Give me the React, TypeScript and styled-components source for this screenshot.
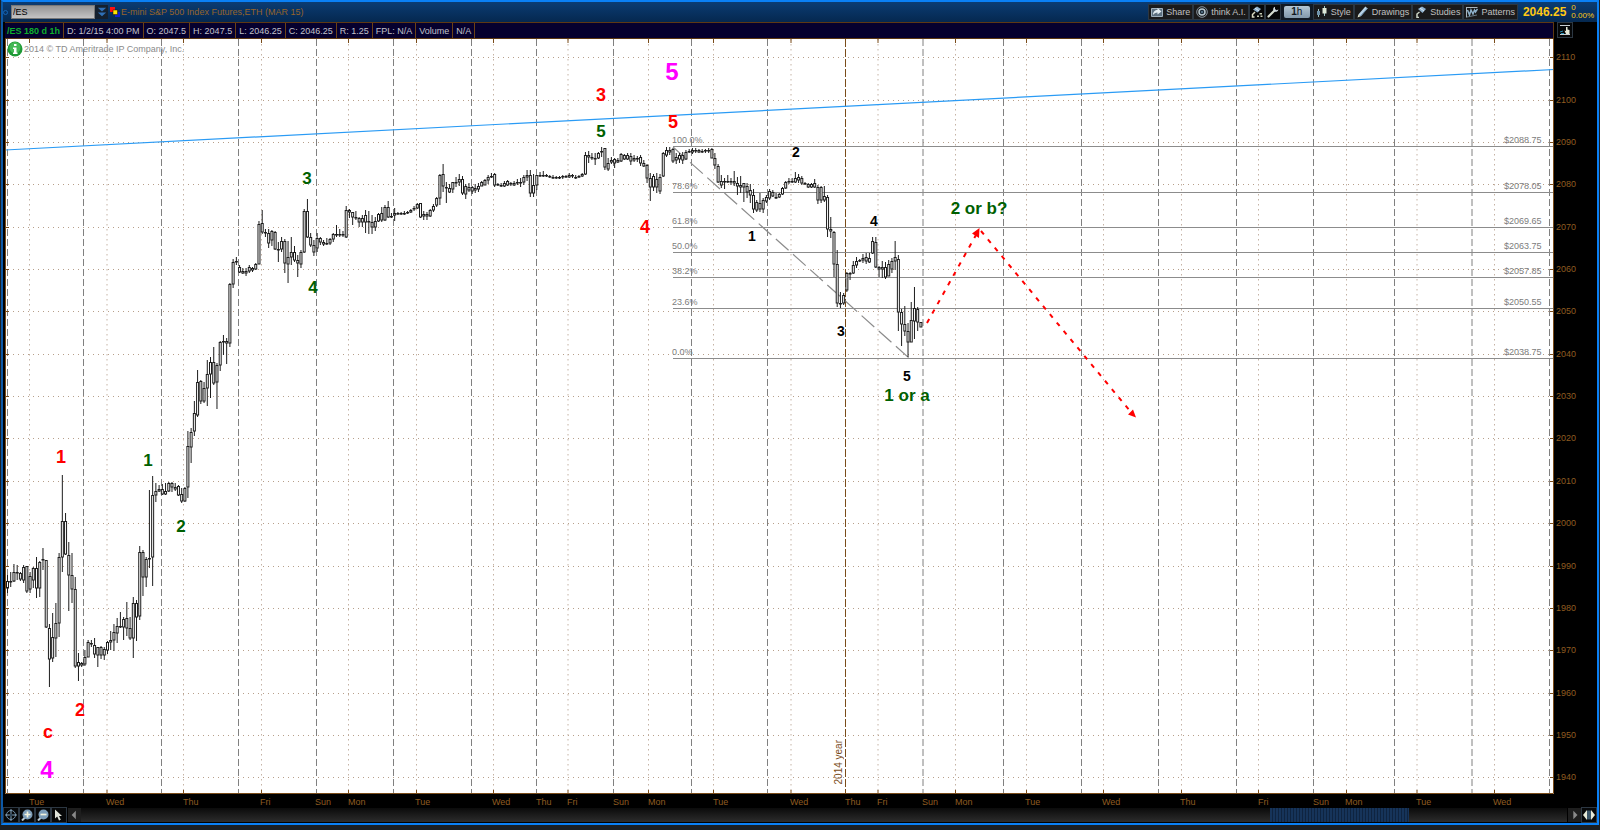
import React from "react";
import styled, { createGlobalStyle } from "styled-components";

const GlobalStyle = createGlobalStyle`
  * {
    box-sizing: border-box;
  }
  body {
    margin: 0;
    background: #101010;
    font-family: "Liberation Sans", Arial, sans-serif;
    font-size: 9px;
    line-height: 12px;
  }
`;

// chart space
const LEFT = 5;
const TOP = 39;
const WIDTH = 1549;
const HEIGHT = 755;
const RIGHT = LEFT + WIDTH;
const BOTTOM = TOP + HEIGHT;

const px = (x: number) => `${((x - LEFT) / WIDTH) * 100}%`;
const py = (y: number) => `${((y - TOP) / HEIGHT) * 100}%`;
const priceY = (price: number) => 57.3 + (2110 - price) * 4.235;

// [high, body top, body bottom, low]
type Candle = number[];

interface Run {
  from: number;
  to: number;
  candles: Candle[];
}

const runs: Run[] = [
  {
    from: 7.3,
    to: 184.7,
    candles: [
      [575, 581, 588, 593], [572, 581, 582, 587], [564, 572, 581, 582], [565, 572, 573, 580], [572, 573, 579, 581],
      [565, 567, 580, 583], [566, 566, 591, 593], [572, 576, 589, 593], [567, 568, 580, 588], [557, 568, 588, 598],
      [561, 562, 588, 597], [548, 559, 560, 570], [560, 560, 627, 628], [624, 628, 659, 687], [613, 637, 658, 662],
      [603, 623, 638, 657], [553, 557, 623, 637], [475, 521, 557, 572], [513, 521, 554, 555], [542, 555, 575, 611],
      [553, 575, 589, 603], [577, 589, 666, 668], [653, 662, 666, 681], [662, 663, 665, 667], [650, 657, 664, 666],
      [640, 642, 657, 657], [640, 643, 644, 647], [638, 645, 654, 658], [647, 647, 655, 667], [646, 647, 655, 659],
      [647, 649, 655, 660], [641, 642, 650, 654], [631, 640, 642, 650], [624, 632, 640, 651], [618, 626, 633, 643],
      [612, 626, 627, 628], [617, 619, 627, 640], [602, 618, 628, 636], [617, 628, 638, 640], [597, 603, 638, 658],
      [600, 603, 617, 641], [546, 552, 616, 620], [550, 552, 577, 596], [557, 559, 577, 587], [490, 558, 559, 568],
      [476, 495, 557, 586], [483, 491, 495, 502], [485, 489, 491, 492], [484, 489, 494, 495], [483, 491, 494, 495],
      [482, 483, 491, 492], [482, 483, 487, 492], [483, 487, 489, 491], [485, 486, 495, 496], [488, 494, 501, 503],
      [487, 488, 501, 502],
    ],
  },
  {
    from: 187.7,
    to: 472,
    candles: [
      [431, 446, 487, 498], [428, 432, 447, 463], [401, 413, 431, 436], [370, 382, 415, 417], [380, 381, 401, 404],
      [382, 388, 401, 403], [360, 374, 388, 406], [357, 362, 374, 398], [347, 362, 383, 385], [363, 365, 382, 409],
      [341, 342, 365, 371], [335, 341, 342, 355], [338, 341, 343, 364], [283, 284, 343, 347], [259, 262, 284, 288],
      [257, 261, 262, 265], [265, 267, 272, 273], [268, 271, 273, 274], [268, 271, 273, 276], [265, 267, 271, 273],
      [267, 268, 270, 272], [263, 264, 269, 270], [221, 224, 264, 264], [210, 223, 232, 234], [229, 232, 233, 237],
      [229, 233, 243, 248], [230, 231, 240, 246], [231, 232, 249, 250], [242, 249, 250, 262], [237, 241, 249, 252],
      [239, 241, 263, 273], [241, 257, 264, 283], [237, 252, 257, 265], [246, 252, 260, 262], [255, 260, 263, 277],
      [250, 252, 264, 268], [209, 211, 252, 253], [199, 211, 237, 238], [233, 237, 245, 247], [240, 245, 252, 256],
      [233, 238, 248, 252], [237, 238, 242, 245], [240, 242, 244, 246], [238, 243, 244, 245], [238, 239, 243, 245],
      [233, 234, 239, 242], [225, 234, 235, 237], [229, 234, 235, 237], [231, 234, 235, 237], [206, 210, 237, 238],
      [209, 210, 212, 218], [212, 212, 217, 225], [211, 217, 218, 220], [217, 218, 222, 227], [215, 218, 222, 227],
      [210, 215, 222, 233], [211, 221, 222, 234], [215, 222, 227, 234], [217, 221, 227, 231], [213, 214, 221, 222],
      [207, 213, 220, 222], [205, 207, 220, 221], [201, 207, 217, 218], [213, 216, 217, 218], [208, 213, 215, 221],
      [212, 213, 214, 215], [212, 213, 214, 215], [211, 213, 214, 215], [211, 212, 213, 214], [209, 210, 212, 213],
      [206, 208, 209, 211], [203, 204, 208, 209], [203, 203, 217, 218], [211, 214, 216, 220], [212, 214, 216, 220],
      [209, 210, 216, 217], [204, 206, 210, 212], [197, 198, 205, 207], [174, 175, 198, 205], [164, 174, 186, 192],
      [182, 187, 188, 203], [184, 188, 192, 193], [182, 182, 189, 193], [177, 182, 183, 187], [174, 179, 182, 186],
      [176, 179, 193, 195], [184, 186, 194, 199], [183, 187, 190, 192], [186, 187, 191, 194],
    ],
  },
  {
    from: 475,
    to: 711.7,
    candles: [
      [184, 188, 190, 193], [183, 186, 189, 192], [181, 182, 186, 186], [179, 180, 185, 185], [175, 177, 180, 184],
      [173, 176, 177, 178], [173, 174, 185, 187], [183, 184, 185, 186], [183, 185, 186, 187], [181, 183, 186, 187],
      [180, 181, 185, 186], [182, 183, 184, 186], [181, 183, 185, 186], [179, 182, 183, 185], [178, 182, 183, 187],
      [175, 177, 182, 185], [170, 175, 177, 181], [170, 175, 193, 197], [174, 185, 193, 197], [175, 175, 185, 190],
      [172, 175, 176, 177], [171, 175, 176, 177], [174, 175, 176, 177], [175, 176, 177, 178], [175, 177, 178, 179],
      [176, 177, 178, 179], [176, 177, 178, 179], [175, 176, 177, 179], [175, 176, 177, 178], [173, 175, 177, 178],
      [174, 175, 176, 178], [175, 177, 178, 179], [175, 176, 177, 178], [173, 174, 176, 177], [152, 155, 174, 175],
      [151, 155, 157, 163], [153, 157, 158, 160], [153, 158, 159, 165], [152, 153, 158, 159], [147, 151, 152, 157],
      [148, 148, 167, 170], [158, 163, 169, 171], [157, 160, 162, 164], [158, 159, 163, 168], [158, 160, 162, 163],
      [153, 154, 161, 162], [154, 155, 159, 160], [153, 155, 159, 160], [153, 156, 161, 165], [155, 158, 160, 162],
      [156, 158, 159, 162], [155, 157, 163, 166], [160, 163, 166, 167], [164, 165, 178, 183], [173, 178, 187, 201],
      [174, 176, 187, 191], [173, 179, 187, 193], [174, 177, 191, 194], [152, 153, 176, 177], [147, 150, 155, 157],
      [147, 150, 152, 155], [148, 149, 161, 163], [153, 157, 160, 164], [153, 155, 159, 163], [152, 155, 160, 164],
      [150, 152, 159, 160], [149, 151, 152, 153], [148, 150, 152, 154], [148, 150, 151, 153], [149, 150, 152, 153],
      [149, 151, 152, 153], [149, 150, 151, 153], [148, 150, 151, 153], [148, 149, 158, 158],
    ],
  },
  {
    from: 714.7,
    to: 920.7,
    candles: [
      [153, 158, 165, 169], [164, 166, 182, 183], [175, 181, 185, 188], [178, 181, 182, 189], [175, 181, 182, 183],
      [178, 181, 182, 185], [171, 181, 183, 186], [177, 183, 186, 195], [176, 185, 187, 193], [183, 183, 187, 202],
      [183, 186, 192, 198], [184, 190, 195, 203], [189, 195, 209, 213], [200, 202, 210, 212], [193, 203, 209, 212],
      [198, 200, 209, 213], [195, 197, 201, 203], [189, 191, 198, 200], [190, 192, 196, 197], [193, 197, 198, 199],
      [193, 194, 197, 198], [187, 188, 194, 195], [181, 182, 188, 189], [178, 181, 182, 184], [178, 181, 182, 183],
      [172, 178, 182, 183], [174, 177, 180, 183], [176, 178, 183, 185], [182, 183, 184, 185], [183, 184, 187, 188],
      [183, 184, 187, 188], [179, 183, 187, 188], [185, 187, 200, 204], [186, 187, 200, 203], [186, 196, 200, 202],
      [195, 197, 229, 237], [217, 229, 231, 238], [231, 232, 264, 277], [250, 264, 303, 307], [292, 303, 304, 308],
      [293, 295, 303, 305], [272, 273, 290, 292], [272, 273, 274, 280], [261, 265, 273, 274], [257, 261, 265, 268],
      [259, 260, 261, 262], [254, 258, 260, 263], [253, 257, 261, 264], [253, 258, 262, 263], [237, 241, 253, 254],
      [237, 242, 267, 268], [266, 267, 269, 277], [261, 267, 269, 278], [262, 267, 277, 279], [260, 264, 276, 276],
      [258, 261, 269, 273], [241, 257, 261, 270], [255, 259, 312, 331], [309, 312, 324, 346], [306, 324, 331, 336],
      [323, 331, 342, 357], [302, 320, 342, 342], [287, 308, 321, 339], [307, 309, 322, 331], [322, 322, 327, 327],
    ],
  },
];

const sessions = [
  7.5, 83.5, 161.5, 238.5, 316.5, 393.5, 471.5, 536.5, 613.5, 691.5, 767.5, 923, 1003.5, 1081.5, 1158.5, 1236.5,
  1313.5, 1394.5, 1472, 1549.5,
];

const noons = [
  29.5, 107, 183.5, 261.5, 348.5, 416.5, 493.5, 568, 648.5, 713.5, 791, 878, 955.5, 1026.5, 1103.5, 1181.5, 1258.5,
  1346.5, 1417, 1494.5,
];

const days = [
  { x: 29, name: "Tue" }, { x: 106, name: "Wed" }, { x: 183, name: "Thu" }, { x: 260, name: "Fri" },
  { x: 315, name: "Sun" }, { x: 348, name: "Mon" }, { x: 415, name: "Tue" }, { x: 492, name: "Wed" },
  { x: 536, name: "Thu" }, { x: 567, name: "Fri" }, { x: 613, name: "Sun" }, { x: 648, name: "Mon" },
  { x: 713, name: "Tue" }, { x: 790, name: "Wed" }, { x: 845, name: "Thu" }, { x: 877, name: "Fri" },
  { x: 922, name: "Sun" }, { x: 955, name: "Mon" }, { x: 1025, name: "Tue" }, { x: 1102, name: "Wed" },
  { x: 1180, name: "Thu" }, { x: 1258, name: "Fri" }, { x: 1313, name: "Sun" }, { x: 1345, name: "Mon" },
  { x: 1416, name: "Tue" }, { x: 1493, name: "Wed" },
];

const prices = Array.from({ length: 18 }, (_, i) => 2110 - i * 10);

const levels = [
  { pct: "100.0%", price: 2088.75 },
  { pct: "78.6%", price: 2078.05 },
  { pct: "61.8%", price: 2069.65 },
  { pct: "50.0%", price: 2063.75 },
  { pct: "38.2%", price: 2057.85 },
  { pct: "23.6%", price: 2050.55 },
  { pct: "0.0%", price: 2038.75 },
];

const levelY = (price: number) => Math.floor(priceY(price) - 0.5);

const RED = "#ff0000";
const GREEN = "#006000";
const PINK = "#ff00ff";
const BLACK = "#000000";

const notes = [
  { x: 672, y: 72, text: "5", color: PINK, size: 24 },
  { x: 47, y: 770, text: "4", color: PINK, size: 24 },
  { x: 61, y: 457, text: "1", color: RED, size: 18 },
  { x: 80, y: 710, text: "2", color: RED, size: 18 },
  { x: 48, y: 732, text: "c", color: RED, size: 18 },
  { x: 601, y: 95, text: "3", color: RED, size: 18 },
  { x: 645, y: 227, text: "4", color: RED, size: 18 },
  { x: 673, y: 122, text: "5", color: RED, size: 18 },
  { x: 148, y: 460, text: "1", color: GREEN, size: 17 },
  { x: 181, y: 526, text: "2", color: GREEN, size: 17 },
  { x: 307, y: 178, text: "3", color: GREEN, size: 17 },
  { x: 313, y: 287, text: "4", color: GREEN, size: 17 },
  { x: 601, y: 131, text: "5", color: GREEN, size: 17 },
  { x: 907, y: 395, text: "1 or a", color: GREEN, size: 17 },
  { x: 979, y: 208, text: "2 or b?", color: GREEN, size: 17 },
  { x: 752, y: 236, text: "1", color: BLACK, size: 14 },
  { x: 796, y: 152, text: "2", color: BLACK, size: 14 },
  { x: 841, y: 331, text: "3", color: BLACK, size: 14 },
  { x: 874, y: 221, text: "4", color: BLACK, size: 14 },
  { x: 907, y: 376, text: "5", color: BLACK, size: 14 },
];

const stats = ["D: 1/2/15 4:00 PM", "O: 2047.5", "H: 2047.5", "L: 2046.25", "C: 2046.25", "R: 1.25", "FPL: N/A", "Volume", "N/A"];

const Icon: React.FC<{ size?: number; children: React.ReactNode }> = ({ size = 12, children }) => (
  <svg width={size} height={size} viewBox="0 0 12 12" fill="none" aria-hidden="true">
    {children}
  </svg>
);

const ShareIcon = () => (
  <Icon>
    <path d="M0.5 2.5h11v8h-11z" fill="#5d7080" stroke="#9fb0bd" />
    <path d="M2 9c0-3.500 2-5 4.500-5V2l4 3.500-4 3V6.500C4.500 6.500 3 7.500 2 9z" fill="#e3ecf1" />
  </Icon>
);

const ThinkIcon = () => (
  <Icon>
    <circle cx="6" cy="6" r="5.300" stroke="#8794a0" />
    <circle cx="6" cy="6" r="3" fill="#1c2a36" stroke="#b6c6cf" strokeWidth="1.500" />
    <circle cx="6" cy="6" r="1" fill="#5e7f96" />
  </Icon>
);

const FlaskIcon = () => (
  <Icon>
    <path d="M2 3.500L6 0.500l4 2.500-3.500 3.500z" fill="#8fb0cc" />
    <path d="M4 2l4 3" stroke="#dce8f0" />
    <path d="M4 6L1.500 8.500V11h2" stroke="#d8d8c0" strokeWidth="1.500" />
    <path d="M8.500 7h2.500v1.500H8.500zM6 9.500h2V11H6zM9.500 9.500h2V11h-2z" fill="#c5cbb4" />
  </Icon>
);

const WrenchIcon = () => (
  <Icon>
    <path d="M1.500 10.500L7 5" stroke="#d5dcd0" strokeWidth="2.200" strokeLinecap="round" />
    <path d="M8 0.800C6 1.500 5.500 4 7 5.200s4 0.500 4.400-1.700L9.400 4.200 8 3z" fill="#cfd8dc" />
  </Icon>
);

const StyleIcon = () => (
  <Icon>
    <path d="M2.500 3v8M8.500 0v10" stroke="#9cc3c3" />
    <path d="M1 5h3v4H1z" fill="#6f93ab" />
    <path d="M6.500 2h4v5.500h-4z" fill="#dfe8d6" />
  </Icon>
);

const PencilIcon = () => (
  <Icon>
    <path d="M2.500 9.500L9.500 1.500" stroke="#b9d3e6" strokeWidth="3" />
    <path d="M3.500 10l7-8" stroke="#6f94b2" />
    <path d="M0.500 11.500l1-3 2 1.800z" fill="#e9ead4" />
  </Icon>
);

const StudiesIcon = () => (
  <Icon>
    <path d="M3 3L7 0.500l4 2.500-3.500 4z" fill="#8fb0cc" />
    <path d="M5 2l4 3" stroke="#dce8f0" />
    <path d="M4.500 6L2 8v3.500h2" stroke="#cdd6c8" strokeWidth="1.500" />
  </Icon>
);

const PatternsIcon = () => (
  <Icon>
    <path d="M0.500 1v10.500M0.500 1.500h11" stroke="#a8b4bc" />
    <path d="M1.500 4l2 5 1.500-5 2 4 1.500-4 1 2 2-3" stroke="#8db0c9" strokeWidth="1.500" />
    <path d="M1 11l10-2" stroke="#687a86" />
  </Icon>
);

const tools = [
  { label: "Share", icon: <ShareIcon /> },
  { label: "think A.I.", icon: <ThinkIcon /> },
];

const chartTools = [
  { label: "Style", icon: <StyleIcon /> },
  { label: "Drawings", icon: <PencilIcon /> },
  { label: "Studies", icon: <StudiesIcon /> },
  { label: "Patterns", icon: <PatternsIcon /> },
];

const Candles: React.FC<Run> = ({ from, to, candles }) => {
  const step = (to - from) / (candles.length - 1);
  return (
    <g stroke="#1c1c1c" fill="#ffffff">
      {candles.map(([high, top, bottom, low], i) => {
        const x = from + i * step + 0.2;
        return (
          <g key={i}>
            <path d={`M${x} ${high}V${low}`} />
            <rect x={x - 1} y={top + 0.5} width={2} height={Math.max(bottom - top - 0.5, 0.5)} />
          </g>
        );
      })}
    </g>
  );
};

const Chart = () => (
  <Plot>
    <Drawing viewBox={`${LEFT} ${TOP} ${WIDTH} ${HEIGHT}`} preserveAspectRatio="none">
      <g stroke="#b79f8a" strokeDasharray="1 4">
        {prices.map((p) => (
          <path key={p} d={`M${LEFT + 3} ${Math.round(priceY(p)) + 0.5}H${RIGHT}`} />
        ))}
      </g>
      <g stroke="#c4b2a4" strokeDasharray="1.500 3.500">
        {noons.map((x) => (
          <path key={x} d={`M${x} ${TOP}V${BOTTOM}`} />
        ))}
      </g>
      <g stroke="#808080" strokeDasharray="7 3">
        {sessions.map((x) => (
          <path key={x} d={`M${x} ${TOP}V${BOTTOM}`} />
        ))}
      </g>
      <path d={`M845.500 ${TOP}V${BOTTOM}`} stroke="#7a4c1a" strokeDasharray="8 2" />
      <g stroke="#7a4c1a">
        {noons.map((x) => (
          <path key={x} d={`M${x} ${BOTTOM - 4}V${BOTTOM}M${x} ${TOP}v4`} />
        ))}
        {prices.map((p) => (
          <path key={p} d={`M${LEFT} ${Math.round(priceY(p)) + 0.5}h4M${RIGHT - 4} ${Math.round(priceY(p)) + 0.5}h4`} />
        ))}
      </g>
      <path d="M5 150L1554 69.500" stroke="#2a9bf5" strokeWidth="1.200" />
      <g stroke="#8c8c8c">
        {levels.map((l) => (
          <path key={l.pct} d={`M673 ${levelY(l.price) + 0.5}H${RIGHT}`} />
        ))}
        <path d="M673 147L909 358" strokeDasharray="17 6" strokeWidth="1.200" />
      </g>
      {runs.map((run) => (
        <Candles key={run.from} {...run} />
      ))}
      <g stroke={RED} strokeWidth="2" strokeDasharray="4.500 6.300">
        <path d="M927 323L976 235" />
        <path d="M981 231L1130 411" />
      </g>
      <path d="M979.500 228l-7.500 5.500 7 4.500z M1136 417.500l-8-3 5-5z" fill={RED} />
      <path d={`M${LEFT + 0.5} ${TOP}V${BOTTOM - 0.5}H${RIGHT - 0.5}V${TOP}`} stroke="#7a4c1a" fill="none" />
    </Drawing>
    <Copyright>
      <svg width="16" height="16" viewBox="0 0 16 16" aria-hidden="true">
        <circle cx="8" cy="8" r="7.500" fill="#1f9a36" />
        <circle cx="8" cy="6.500" r="5.500" fill="#45b956" />
        <path d="M7 3h2.500v2H7zM6 6.500h3.500v5h1V13H6v-1.500h1V8H6z" fill="#ffffff" />
      </svg>
      2014 © TD Ameritrade IP Company, Inc.
    </Copyright>
    {levels.map((l) => (
      <React.Fragment key={l.pct}>
        <Level style={{ left: px(672), top: py(levelY(l.price)) }}>{l.pct}</Level>
        <Level style={{ left: px(1504), top: py(levelY(l.price)) }}>${l.price.toFixed(2)}</Level>
      </React.Fragment>
    ))}
    {notes.map((n) => (
      <Note key={`${n.x}-${n.y}`} color={n.color} $size={n.size} style={{ left: px(n.x), top: py(n.y) }}>
        {n.text}
      </Note>
    ))}
    <YearMark style={{ left: px(834), top: py(740) }}>2014 year</YearMark>
  </Plot>
);

const App = () => {
  return (
    <Page>
      <GlobalStyle />
      <Window>
        <Header>
          <LinkDot aria-label="Link" />
          <SymbolBox>
            <SymbolInput aria-label="Symbol" defaultValue="/ES" />
            <SymbolButton aria-label="Open symbol list">
              <Icon size={10}>
                <path d="M1 1h10L6 5.500zM1 6.500h10L6 11z" fill="#2f6fb5" />
              </Icon>
            </SymbolButton>
          </SymbolBox>
          <svg width="12" height="12" viewBox="0 0 12 12" aria-hidden="true">
            <path d="M1 1h5v5H1z" fill="#ff1010" />
            <path d="M6 6h5v5H6z" fill="#1020d0" />
            <path d="M4 4h4.500v4.500H4z" fill="#ffe600" stroke="#201000" strokeWidth="0.500" />
          </svg>
          <Title>E-mini S&amp;P 500 Index Futures,ETH (MAR 15)</Title>
          <Tools>
            {tools.map((t) => (
              <ToolButton key={t.label}>
                {t.icon}
                {t.label}
              </ToolButton>
            ))}
            <IconButton aria-label="Studies setup">
              <FlaskIcon />
            </IconButton>
            <IconButton aria-label="Settings">
              <WrenchIcon />
            </IconButton>
            <Frame>
              <Period>
                <b>1</b>h
              </Period>
            </Frame>
            {chartTools.map((t) => (
              <ToolButton key={t.label}>
                {t.icon}
                {t.label}
              </ToolButton>
            ))}
          </Tools>
          <Quote>
            <Last>2046.25</Last>
            <Change>
              <span>0</span>
              <span>0.00%</span>
            </Change>
          </Quote>
        </Header>
        <Main>
          <StatusBar>
            <Stat $symbol>/ES 180 d 1h</Stat>
            {stats.map((s) => (
              <Stat key={s}>{s}</Stat>
            ))}
          </StatusBar>
          <Corner>
            <IconButton aria-label="Scale">
              <Icon>
                <path d="M1 1.500h10M1 10.500h10" stroke="#c8ced2" />
                <path d="M1 8l3-1M2 9.500h3" stroke="#2a91b5" />
                <path d="M7 3v4L5.500 6.500 7 10h3.500V6L8.500 5.500V3z" fill="#e6ead8" />
              </Icon>
            </IconButton>
          </Corner>
          <Chart />
          <PriceAxis>
            {prices.map((p) => (
              <Price key={p} style={{ top: py(priceY(p)) }}>
                {p}
              </Price>
            ))}
          </PriceAxis>
          <TimeAxis>
            {days.map((d) => (
              <Day key={d.x} style={{ left: px(d.x) }}>
                {d.name}
              </Day>
            ))}
          </TimeAxis>
        </Main>
        <BottomBar>
          <IconButton aria-label="Crosshair">
            <Icon>
              <circle cx="6" cy="6" r="4.500" stroke="#6f8ea8" />
              <path d="M6 0v12M0 6h12" stroke="#87a6bd" />
              <circle cx="6" cy="6" r="1.500" fill="#2d4558" />
            </Icon>
          </IconButton>
          <IconButton aria-label="Zoom in">
            <Icon>
              <path d="M1 11.500l3-3" stroke="#b8c6ce" strokeWidth="2" />
              <circle cx="6.500" cy="5.500" r="5" fill="#7d9db8" />
              <path d="M3.500 5.500h6M6.500 2.500v6" stroke="#f2f2dc" strokeWidth="1.700" />
            </Icon>
          </IconButton>
          <IconButton aria-label="Zoom out">
            <Icon>
              <path d="M1 11.500l3-3" stroke="#b8c6ce" strokeWidth="2" />
              <circle cx="6.500" cy="5.500" r="5" fill="#7d9db8" />
              <path d="M3.500 5.500h6" stroke="#f2f2dc" strokeWidth="1.700" />
            </Icon>
          </IconButton>
          <IconButton aria-label="Pointer">
            <Icon>
              <path d="M2 0.500v9l2.200-2L6 11.500l1.800-0.800L6 7h3z" fill="#dfe3da" />
            </Icon>
          </IconButton>
          <ArrowButton aria-label="Scroll left">
            <Icon size={10}>
              <path d="M7 1v10L2 6z" fill="#8a8a8a" />
            </Icon>
          </ArrowButton>
          <Track>
            <Thumb />
          </Track>
          <ArrowButton aria-label="Scroll right">
            <Icon size={10}>
              <path d="M4 1v10l5-5z" fill="#8a8a8a" />
            </Icon>
          </ArrowButton>
          <IconButton aria-label="Fit width">
            <Icon>
              <path d="M0 6l4-5v10z" fill="#e6ead8" />
              <path d="M12 6L8 1v10z" fill="#e6ead8" />
              <path d="M5 1.500v9M7 1.500v9" stroke="#6fa5c8" />
            </Icon>
          </IconButton>
        </BottomBar>
      </Window>
    </Page>
  );
};

export default App;

const Page = styled.div`
  display: flex;
  height: 100vh;
  min-height: 500px;
  padding: 0 1px 2px;
  background: #1c1f22;
`;

const Window = styled.div`
  display: flex;
  flex-direction: column;
  flex: 1;
  min-width: 0;
  margin-bottom: 3px;
  border: 2px solid #0a80f5;
  border-left-color: #0c58a6;
  background: #000000;
`;

const Header = styled.header`
  display: flex;
  align-items: center;
  height: 20px;
  padding-right: 3px;
  background: linear-gradient(#0b3c73, #05284f);
`;

const LinkDot = styled.button`
  width: 5px;
  height: 5px;
  margin: 0 3px 0 0;
  padding: 0;
  border: 1px solid #1565b8;
  border-radius: 50%;
  background: transparent;
`;

const SymbolBox = styled.div`
  display: flex;
  width: 97px;
  height: 14px;
  margin-right: 1px;
`;

const SymbolInput = styled.input`
  flex: 1;
  min-width: 0;
  padding: 0 1px;
  border: 1px solid #777777;
  background: linear-gradient(#949494, #c4c4c4);
  font: 9px "Liberation Sans", Arial, sans-serif;
  color: #000000;
`;

const SymbolButton = styled.button`
  display: flex;
  align-items: center;
  justify-content: center;
  width: 13px;
  padding: 0;
  border: 0;
  background: #14202e;
`;

const Title = styled.h1`
  margin: 0;
  font-size: 9px;
  font-weight: normal;
  color: #96642a;
  white-space: nowrap;
`;

const Tools = styled.div`
  display: flex;
  align-items: center;
  height: 16px;
  margin-left: auto;
`;

const ToolButton = styled.button`
  display: flex;
  align-items: center;
  gap: 3px;
  height: 16px;
  padding: 0 2px;
  border: 1px solid #2c3742;
  background: #1a1a1b;
  font: 9px "Liberation Sans", Arial, sans-serif;
  color: #c0c0c0;
  white-space: nowrap;
`;

const IconButton = styled.button`
  display: flex;
  flex: none;
  align-items: center;
  justify-content: center;
  width: 16px;
  height: 16px;
  padding: 0;
  border: 1px solid #2c3742;
  background: #060708;
`;

const Frame = styled.div`
  display: flex;
  align-items: center;
  height: 16px;
  padding: 0 3px;
  background: #111a24;
`;

const Period = styled.button`
  width: 26px;
  height: 12px;
  padding: 0;
  border: 0;
  border-radius: 2px;
  background: linear-gradient(#b4c6d4, #8299ab);
  font: 10px/12px "Liberation Sans", Arial, sans-serif;
  color: #10181f;
`;

const Quote = styled.div`
  display: flex;
  align-items: center;
  gap: 5px;
  margin-left: 5px;
  color: #ffc814;
`;

const Last = styled.strong`
  font-size: 12px;
`;

const Change = styled.div`
  display: flex;
  flex-direction: column;
  font-size: 8px;
  line-height: 8px;
`;

const Main = styled.main`
  display: grid;
  flex: 1;
  grid-template-columns: minmax(0, 1fr) 43px;
  grid-template-rows: 17px minmax(0, 1fr) 13px;
  min-height: 0;
  padding-left: 2px;
`;

const StatusBar = styled.div`
  display: flex;
  overflow: hidden;
  border: 1px solid #5e3812;
  border-left: 0;
  background: #06002e;
`;

const Stat = styled.span<{ $symbol?: boolean }>`
  padding: 2px 3px 0 ${(props) => (props.$symbol ? 2 : 3)}px;
  border-right: 1px solid #6b4116;
  font-weight: ${(props) => (props.$symbol ? "bold" : "normal")};
  color: ${(props) => (props.$symbol ? "#0fae2c" : "#c2c2ca")};
  white-space: nowrap;
`;

const Corner = styled.div`
  padding-left: 3px;
`;

const Plot = styled.section`
  position: relative;
  min-height: 0;
  overflow: hidden;
  background: #ffffff;
`;

const Drawing = styled.svg`
  display: block;
  width: 100%;
  height: 100%;
`;

const Copyright = styled.div`
  position: absolute;
  top: 2px;
  left: 2px;
  display: flex;
  align-items: center;
  gap: 1px;
  color: #8a8a8a;
`;

const Level = styled.span`
  position: absolute;
  transform: translateY(-100%);
  color: #7c7c7c;
`;

const Note = styled.span<{ $size: number }>`
  position: absolute;
  transform: translate(-50%, -50%);
  font-size: ${(props) => props.$size}px;
  font-weight: bold;
  line-height: 1;
  color: ${(props) => props.color};
  white-space: nowrap;
`;

const YearMark = styled.span`
  position: absolute;
  writing-mode: vertical-rl;
  rotate: 180deg;
  font-size: 10px;
  line-height: 10px;
  color: #7a4c1a;
`;

const PriceAxis = styled.div`
  position: relative;
`;

const Price = styled.span`
  position: absolute;
  left: 2px;
  transform: translateY(-50%);
  color: #8f5c20;
`;

const TimeAxis = styled.div`
  position: relative;
`;

const Day = styled.span`
  position: absolute;
  top: 2px;
  color: #8f5c20;
`;

const BottomBar = styled.footer`
  display: flex;
  height: 16px;
  background: #000000;
`;

const ArrowButton = styled.button`
  display: flex;
  flex: none;
  align-items: center;
  justify-content: center;
  width: 13px;
  margin: 1px 0 1px 1px;
  padding: 0;
  border: 0;
  background: #1e1e1e;
`;

const Track = styled.div`
  flex: 1;
  margin: 1px 0;
  background: linear-gradient(#0b0b0b, #2c2c2c);
`;

const Thumb = styled.div`
  width: 9.34%;
  height: 100%;
  margin-left: 80%;
  background: repeating-linear-gradient(90deg, #16345a 0 2px, #0f2440 2px 3px);
`;
